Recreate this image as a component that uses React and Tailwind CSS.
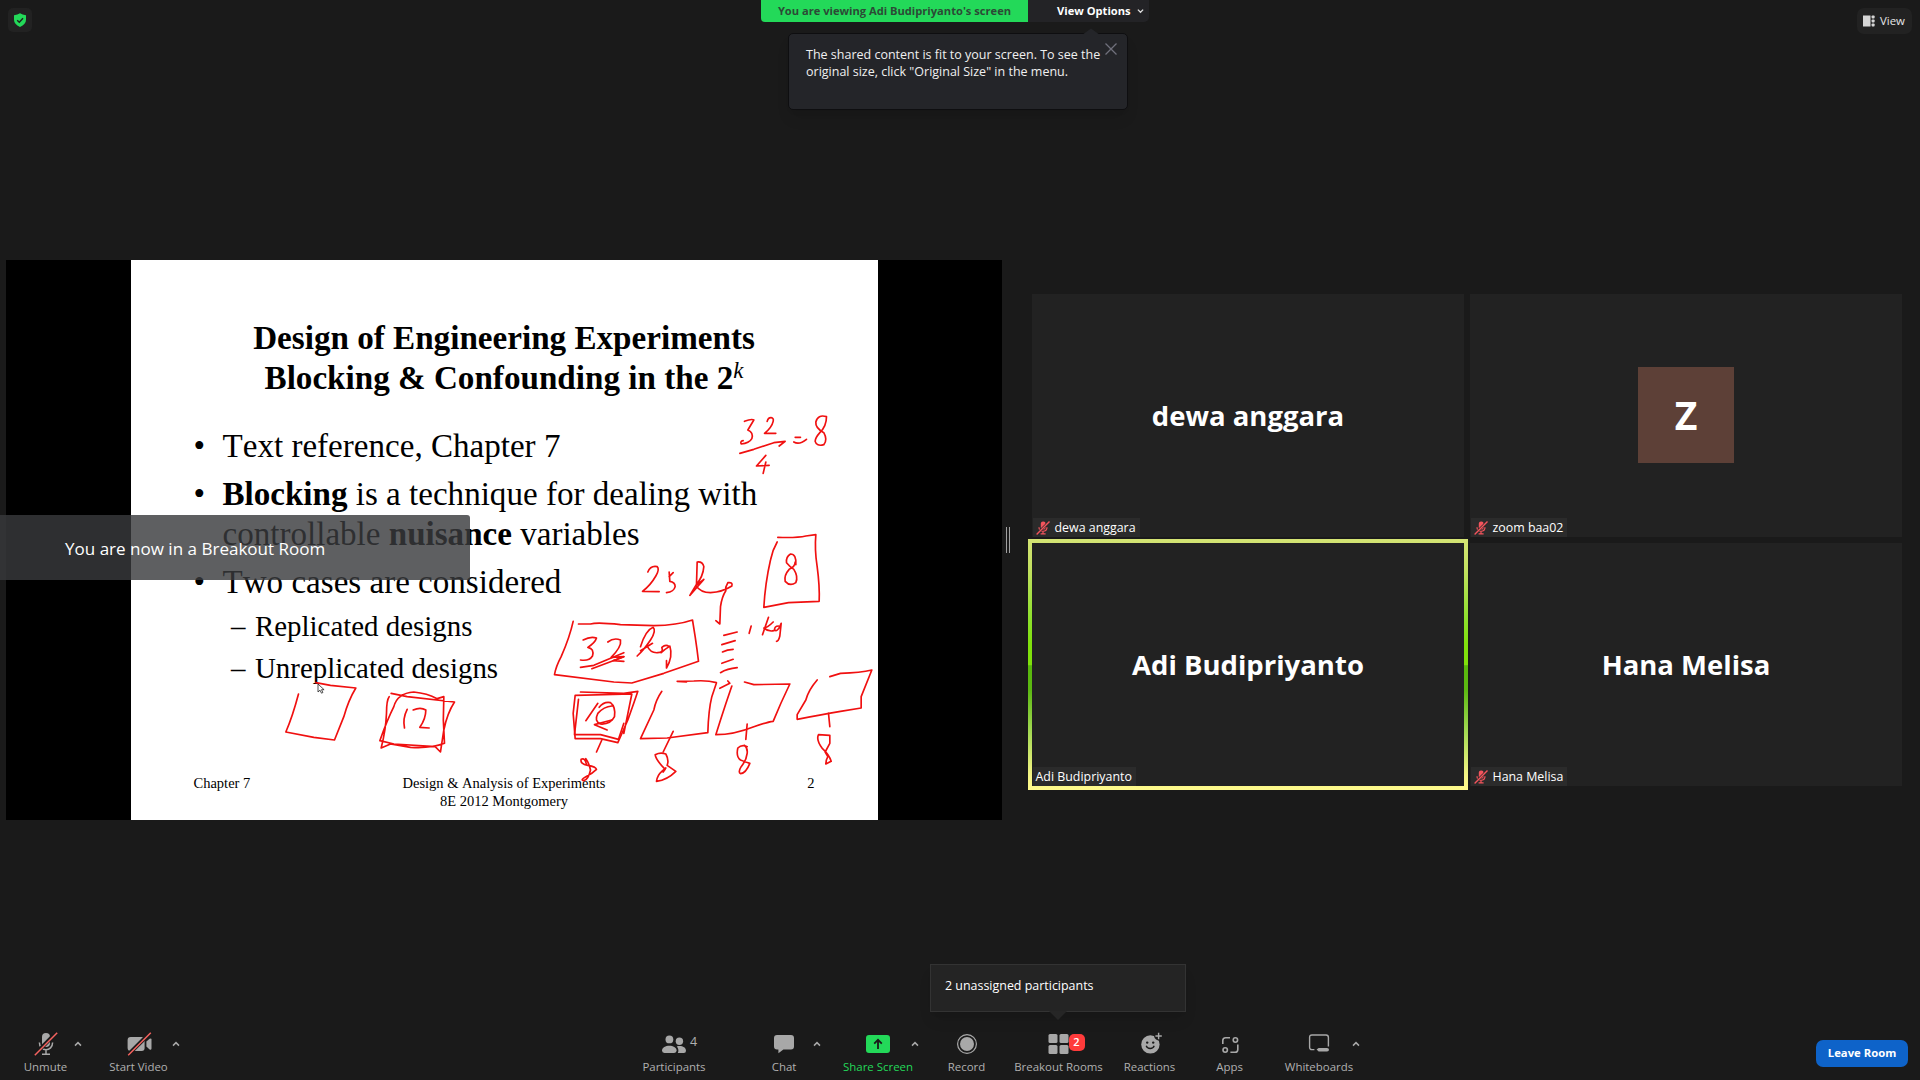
import React from "react";

const inkStrokes = [
  {
    origin: "translate(540 400) scale(0.33333)",
    paths: [
      // 32 / 4 = 8
      "M612 64 C622 60 634 56 640 60 L622 90 Q640 98 634 116 Q626 130 602 132 Q598 124 608 122",
      "M680 64 C684 48 702 50 698 64 C694 82 682 92 672 100 L706 100",
      "M598 160 L640 148 L700 128 L734 124 L716 138",
      "M676 166 L648 198 L686 196 M676 186 L668 220",
      "M764 112 L780 112 M760 126 Q776 136 798 118",
      "M858 50 Q832 42 826 66 Q824 84 850 98 Q862 120 850 134 Q828 140 824 124 Q824 114 838 98 Q858 78 858 50",
      // 25 kg
      "M322 516 Q330 496 350 500 Q358 508 346 528 Q330 556 306 574 L356 575",
      "M386 516 L388 544 Q404 546 404 560 Q400 576 378 578 M386 530 L398 518",
      "M468 552 L470 486 Q486 484 490 500 Q488 530 466 556 L448 586 L490 538 L466 556 Q480 578 510 578 Q546 576 574 558 Q578 546 562 548 Q554 560 556 572 Q544 590 540 620 L538 672 L526 662",
      // boxed 8
      "M712 412 Q770 414 796 408 L826 404 Q822 450 830 500 Q838 560 836 604 L744 608 L670 622 Q674 550 690 480 Q696 450 710 426",
      "M766 494 Q768 462 750 462 Q736 470 738 488 Q748 500 760 508 Q774 530 766 548 Q748 560 734 544 Q730 526 746 508 Q764 500 764 486",
    ],
  },
  {
    origin: "translate(540 600) scale(0.33333)",
    paths: [
      // 1 kg and the tally marks
      "M632 78 L626 100",
      "M684 52 L666 104 M698 66 Q680 84 670 84 Q684 96 700 92 M714 78 Q702 78 702 90 Q710 96 718 80 L722 70 L718 108 Q714 124 708 124",
      "M550 106 L590 96",
      "M544 134 L584 122",
      "M546 156 Q560 148 578 148",
      "M544 190 L578 178",
      "M540 218 Q560 206 590 203",
      "M538 265 L568 250 L562 243",
      // boxed 32 kg
      "M98 64 Q88 110 62 170 Q46 200 42 224 Q140 236 220 246 L274 249 L370 220 L474 184 Q470 150 464 110 L456 60 Q410 76 340 77 L240 74 Q170 66 150 72 L114 72",
      "M128 120 Q150 108 168 114 Q164 128 142 142 Q162 146 156 168 Q146 184 120 180",
      "M202 126 Q220 112 240 120 Q244 140 212 172 L250 170 L218 182 L250 184",
      "M120 202 L160 196 L250 158",
      "M154 206 L250 170",
      "M300 140 Q316 90 338 82 Q348 92 330 120 Q310 150 290 168 M300 152 L336 130 M320 138 Q330 160 352 158 Q370 158 364 142 Q376 132 386 140 Q370 150 362 158 M388 138 Q398 170 378 204 L378 182",
      // boxed 10
      "M120 276 L250 280 L292 274 Q280 310 262 360 L232 428 L180 416 L104 416 L98 340 L104 286 L274 282 Q262 340 250 400",
      "M114 298 L102 404 L180 404 L234 418 L250 370",
      "M172 310 L136 362",
      "M176 322 Q190 304 210 308 Q226 320 222 350 Q210 374 180 372 Q160 364 172 340 Q190 320 214 318",
      "M214 360 L162 374 L200 390",
      "M184 420 L168 456",
      "M138 494 Q134 472 122 478 Q118 492 142 496 Q166 500 168 508 Q154 522 136 530 Q118 540 130 542 Q144 538 150 510 Q146 490 136 476",
      // second block
      "M364 274 Q346 300 340 330 L300 416 L380 414 L502 398 Q504 330 514 290 L528 248 Q500 240 460 243 L410 244 L438 246",
      "M398 394 L368 456",
      "M368 516 L374 508 Q346 480 344 464 Q360 456 376 462 Q386 480 380 496 L406 514 Q380 540 348 544 Q350 526 364 514 L376 504",
      // third block
      "M574 258 Q556 310 540 360 L526 404 Q580 404 640 380 Q680 366 698 364 Q720 310 748 252 L640 254 L612 246",
      "M620 372 L616 418",
      "M620 440 Q604 432 592 444 Q586 470 600 480 Q620 488 628 490 Q616 520 600 521 Q592 516 602 500 Q618 480 620 460 Q622 444 612 436",
      // fourth block
      "M830 240 Q804 270 796 300 L770 344 L770 358 Q840 344 900 334 L962 324 L962 290 L994 210 Q960 218 900 220 L868 230",
      "M864 340 L868 380",
      "M868 406 L834 404 Q826 420 846 446 Q866 464 872 484 L856 492 Q856 480 862 470 L854 456 L868 430 L868 406",
    ],
  },
  {
    origin: "translate(0 500) scale(0.33333)",
    paths: [
      "M946 548 L990 556 L1066 564 Q1044 600 1030 650 L1002 720 L940 712 L856 696 Q876 650 894 582",
      // boxed 12
      "M1172 580 L1220 590 L1362 606 Q1340 640 1330 690 L1320 756 L1304 740 L1180 732 L1138 722 Q1160 660 1180 620 Q1190 580 1240 576 Q1280 580 1310 596 L1330 590 Q1326 660 1332 730 Q1290 746 1230 742 L1170 732 L1142 744 Q1156 690 1158 640 Q1158 600 1166 590",
      "M1220 628 Q1206 656 1212 684",
      "M1238 630 Q1260 620 1276 630 Q1276 656 1258 682 L1286 684",
    ],
  },
];

const Ink = () => (
  <svg viewBox="130.5 260 747 560" className="absolute inset-0 w-[747px] h-[560px]" fill="none">
    {inkStrokes.map((group) => (
      <g key={group.origin} transform={group.origin} stroke="#f01010" strokeWidth="5" strokeLinecap="round" strokeLinejoin="round">
        {group.paths.map((d) => (
          <path key={d} d={d} />
        ))}
      </g>
    ))}
    <path d="M317.5 684 v8 l2 -1.8 l1.5 3 l1.4 -.7 l-1.4 -2.8 h2.6 z" fill="#fff" stroke="#222" strokeWidth=".8" />
  </svg>
);

const Slide = () => (
  <div className="relative w-[747px] h-[560px] bg-white text-black font-['Liberation_Serif',serif] [font-kerning:none] pt-[58px] flex flex-col">
    <h1 className="text-center text-[33.15px] leading-[40px] font-bold">
      Design of Engineering Experiments
      <br />
      Blocking &amp; Confounding in the 2<sup className="text-[23px] font-normal italic">k</sup>
    </h1>
    <ul className="mt-[28px] ml-[63px] flex flex-col gap-2 text-[33.1px] leading-[40px]">
      <li className="flex">
        <span className="w-[29px]">•</span>
        <span>Text reference, Chapter 7</span>
      </li>
      <li className="flex">
        <span className="w-[29px]">•</span>
        <span>
          <b>Blocking</b> is a technique for dealing with
          <br />
          controllable <b>nuisance</b> variables
        </span>
      </li>
      <li className="flex">
        <span className="w-[29px]">•</span>
        <span>Two cases are considered</span>
      </li>
    </ul>
    <ul className="mt-[6px] ml-[100.5px] flex flex-col gap-[6px] text-[28.9px] leading-[36px]">
      <li className="flex">
        <span className="w-[24px]">–</span>Replicated designs
      </li>
      <li className="flex">
        <span className="w-[24px]">–</span>Unreplicated designs
      </li>
    </ul>
    <div className="mt-auto mb-[10px] grid grid-cols-3 px-[63px] text-[14.5px] leading-[17.5px]">
      <span>Chapter 7</span>
      <span className="text-center whitespace-nowrap">
        Design &amp; Analysis of Experiments
        <br />
        8E 2012 Montgomery
      </span>
      <span className="text-right">2</span>
    </div>
    <Ink />
  </div>
);

const MutedMic = () => (
  <svg viewBox="0 0 14 14" className="w-[14px] h-[14px]">
    <rect x="4.8" y="0.6" width="4.8" height="8" rx="2.2" fill="#f4545c" />
    <path d="M3 6.2c0 5.4 8 5.4 8 0M7 10.4v2.2M4.6 12.8h5" fill="none" stroke="#f4545c" strokeWidth="1.2" />
    <path d="M0.4 13.4L13.4 0.6" stroke="#2b2b2b" strokeWidth="2.6" />
    <path d="M0.6 13.5L13.5 0.6" stroke="#f4545c" strokeWidth="1.4" />
  </svg>
);

const Tile = ({ name, muted, avatar, active }) => (
  <div className="relative w-[432px] h-[243px] bg-[#222222] flex items-center justify-center text-white">
    {active && (
      <div className="absolute -inset-1 border-4 [border-image:linear-gradient(#d4e474_0%,#c3e060_12%,#8de02c_32%,#80e00c_42%,#80e00c_50%,#59b80c_50.5%,#5cb812_60%,#a0d850_76%,#f4f484_94%,#fffa8c_100%)_4]" />
    )}
    {avatar ? (
      <div className="w-24 h-24 mb-px bg-[#5d4037] flex items-center justify-center text-[39px] font-bold">{avatar}</div>
    ) : (
      <span className="text-[27.5px] font-bold">{name}</span>
    )}
    <div className="absolute left-px bottom-0 h-[19px] bg-[#2b2b2b] flex items-center gap-[5px] pl-[2.5px] pr-[4px] text-[12.4px] leading-[19px] whitespace-nowrap">
      {muted && <MutedMic />}
      <span>{name}</span>
    </div>
  </div>
);

const Caret = ({ className }) => (
  <svg viewBox="0 0 8 6" className={`w-2 h-1.5 mt-[21px] shrink-0 ${className}`}>
    <path d="M1 4.6L4 1.6L7 4.6" fill="none" stroke="#a8a8a8" strokeWidth="1.5" />
  </svg>
);

const Tool = ({ label, className, children }) => (
  <div className={`flex flex-col items-center shrink-0 pt-3 text-[11.45px] leading-[15px] whitespace-nowrap ${className}`}>
    <div className="relative w-6 h-6 mb-[3px]">{children}</div>
    {label}
  </div>
);

const iconClass = "w-6 h-6 overflow-visible";

const Toolbar = () => (
  <footer className="h-[60px] flex items-start pl-[23px] pr-3 text-[#b0b0b0]">
    <Tool label="Unmute" className="w-[45px]">
      <svg viewBox="0 0 24 24" className={iconClass}>
        <rect x="8" y="1" width="8" height="14" rx="4" fill="#a8a8a8" />
        <path d="M5.4 10.5c0 9.6 13.2 9.6 13.2 0M12 18v4M8 22.2h8" fill="none" stroke="#a8a8a8" strokeWidth="1.5" />
        <path d="M0 23.4L23 0" stroke="#1a1a1a" strokeWidth="4" />
        <path d="M0.8 23.2L23.2 0.8" stroke="#f4625f" strokeWidth="1.5" />
      </svg>
    </Tool>
    <Caret className="ml-[6px]" />
    <Tool label="Start Video" className="ml-[26px] w-[61px]">
      <svg viewBox="0 0 24 24" className={iconClass}>
        <rect x="0.6" y="5" width="17" height="14" rx="3" fill="#a8a8a8" />
        <path d="M19.4 9.6l3.2-2.8q1.9-1 1.9.8v9q0 1.8-1.9.8l-3.2-2.8z" fill="#a8a8a8" />
        <path d="M0.5 23.4L24 0" stroke="#1a1a1a" strokeWidth="4" />
        <path d="M1.2 23.2L23.8 0.8" stroke="#f4625f" strokeWidth="1.5" />
      </svg>
    </Tool>
    <Caret className="ml-[3px]" />
    <Tool label="Participants" className="ml-[462px] w-[64px]">
      <svg viewBox="0 0 24 24" className={iconClass} fill="#a8a8a8">
        <circle cx="7.4" cy="7.4" r="3.9" />
        <circle cx="17.4" cy="9.2" r="3.7" />
        <path d="M0 18.6c0-6.6 14.6-6.6 14.6 0q0 2.4-2.4 2.4H2.4Q0 21 0 18.6z" />
        <path d="M14.8 14.4c4-1.2 9.2.2 9.2 4.4q0 2.2-2.2 2.2h-6q1.6-3.4-1-6.6z" />
      </svg>
      <span className="absolute left-[28px] top-[2px] text-[12.5px] leading-[16px]">4</span>
    </Tool>
    <Tool label="Chat" className="ml-[58px] w-[40px]">
      <svg viewBox="0 0 24 24" className={iconClass} fill="#a8a8a8">
        <path d="M5 3h14q3 0 3 3v8.4q0 3-3 3h-7.6L6.4 21.2v-3.8H5q-3 0-3-3V6q0-3 3-3z" />
      </svg>
    </Tool>
    <Caret className="ml-[9px]" />
    <Tool label="Share Screen" className="ml-[21px] w-[72px] text-[#23d959]">
      <svg viewBox="0 0 24 24" className={iconClass}>
        <rect x="0" y="3" width="24" height="18" rx="3" fill="#23d959" />
        <path d="M12 17V8.4M8.2 11.6L12 7.8l3.8 3.8" fill="none" stroke="#1a1a1a" strokeWidth="1.8" />
      </svg>
    </Tool>
    <Caret className="-ml-[3px]" />
    <Tool label="Record" className="ml-[26px] w-[43px]">
      <svg viewBox="0 0 24 24" className={iconClass}>
        <circle cx="12" cy="12" r="9.4" fill="none" stroke="#a8a8a8" strokeWidth="1.2" />
        <circle cx="12" cy="12" r="7" fill="#a8a8a8" />
      </svg>
    </Tool>
    <Tool label="Breakout Rooms" className="ml-[26px] w-[89px]">
      <svg viewBox="0 0 24 24" className={iconClass} fill="#a8a8a8">
        <rect x="1.5" y="2" width="9" height="9" rx="1.5" />
        <rect x="12.5" y="2" width="9" height="9" rx="1.5" />
        <rect x="1.5" y="13" width="9" height="9" rx="1.5" />
        <rect x="12.5" y="13" width="9" height="9" rx="1.5" />
      </svg>
      <span className="absolute left-[22px] top-[2px] w-4 h-[17px] rounded-[5px] bg-[#ff3b3b] text-white text-[11px] leading-[16px] font-semibold text-center">
        2
      </span>
    </Tool>
    <Tool label="Reactions" className="ml-5 w-[53px]">
      <svg viewBox="0 0 24 24" className={iconClass}>
        <circle cx="12.4" cy="12.4" r="9.2" fill="#a8a8a8" />
        <circle cx="9.2" cy="10.6" r="1.2" fill="#1a1a1a" />
        <circle cx="15.2" cy="10.6" r="1.2" fill="#1a1a1a" />
        <path d="M8.2 13.8c1.2 3.6 6.8 3.6 8 0" fill="none" stroke="#1a1a1a" strokeWidth="1.3" />
        <circle cx="20.6" cy="4" r="4.4" fill="#1a1a1a" />
        <path d="M20.6 0.8v6.4M17.4 4h6.4" stroke="#a8a8a8" strokeWidth="1.4" />
      </svg>
    </Tool>
    <Tool label="Apps" className="ml-[39px] w-[29px]">
      <svg viewBox="0 0 24 24" className={iconClass} fill="none" stroke="#a8a8a8" strokeWidth="1.6">
        <path d="M4.8 12V8.6q0-2.8 2.8-2.8H12M19.8 12.6v4.8q0 2.8-2.8 2.8h-4.6" />
        <circle cx="17.4" cy="8" r="2.2" />
        <circle cx="7.2" cy="18" r="2.2" />
      </svg>
    </Tool>
    <Tool label="Whiteboards" className="ml-10 w-[70px]">
      <svg viewBox="0 0 24 24" className={iconClass}>
        <path d="M7.4 17.6H5q-2.4 0-2.4-2.4V5.4Q2.6 3 5 3h14q2.4 0 2.4 2.4v9.2" fill="none" stroke="#a8a8a8" strokeWidth="1.4" />
        <path d="M9.6 17.6l2-1.6H20q2 0 2 1.8t-2 1.8h-8.4z" fill="#a8a8a8" />
      </svg>
    </Tool>
    <Caret className="-ml-0.5" />
    <button className="ml-auto mt-5 w-[92px] h-[27px] rounded-[7px] bg-[#0e63c9] text-white text-[11.3px] font-bold">
      Leave Room
    </button>
  </footer>
);

const Header = () => (
  <header className="relative h-[60px] flex items-start">
    <div className="ml-2 mt-2 w-6 h-6 rounded-[5px] bg-[#222222] flex items-center justify-center">
      <svg viewBox="0 0 14 14" className="w-[14px] h-[14px]">
        <path d="M7 0.2Q9.4 1.9 13 2.2V6.8Q13 11.4 7 13.9Q1 11.4 1 6.8V2.2Q4.6 1.9 7 0.2z" fill="#23d959" />
        <path d="M4.2 7.2L6.3 9.2L10 5.2" fill="none" stroke="#1f1f1f" strokeWidth="1.4" />
      </svg>
    </div>
    <div className="ml-[729px] flex h-[22px] text-[11.15px] leading-[22px] font-bold whitespace-nowrap">
      <div className="w-[267px] h-[22px] rounded-bl bg-[#23d959] text-[#2c4a36] text-center">
        You are viewing Adi Budipriyanto's screen
      </div>
      <div className="w-[121px] h-[22px] rounded-br-[5px] bg-[#232326] text-white flex items-center pl-[29px] gap-[6px]">
        View Options
        <svg viewBox="0 0 8 6" className="w-[7px] h-[6px]">
          <path d="M1 1.4L4 4.4L7 1.4" fill="none" stroke="#e0e0e0" strokeWidth="1.5" />
        </svg>
      </div>
    </div>
    <button className="ml-auto mr-2 mt-2 w-[55px] h-[26px] rounded-[7px] bg-[#222222] text-[#e6e6e6] text-[11.4px] flex items-center pl-[6px] pb-px gap-[5px]">
      <svg viewBox="0 0 12 12" className="w-3 h-3" fill="#d6d6d6">
        <rect x="0" y="0.5" width="7.5" height="11" />
        <rect x="8.6" y="0.5" width="3" height="3" rx=".8" />
        <rect x="8.6" y="4.5" width="3" height="3" rx=".8" />
        <rect x="8.6" y="8.5" width="3" height="3" rx=".8" />
      </svg>
      View
    </button>

    {/* Fit-to-screen hint */}
    <div className="absolute left-[788px] top-[33px] w-[340px] h-[77px] rounded-[5px] bg-[#242529] border border-[#0e0e10] shadow-lg pl-[17px] pt-3 text-[12.5px] leading-[17px] text-[#f0f0f0] whitespace-nowrap">
      The shared content is fit to your screen. To see the
      <br />
      original size, click "Original Size" in the menu.
      <svg viewBox="0 0 18 7" className="absolute left-[293px] -top-[6px] w-[18px] h-[7px]">
        <path d="M0 7L9 0.5L18 7z" fill="#242529" />
      </svg>
      <svg viewBox="0 0 12 12" className="absolute left-[316px] top-[9px] w-3 h-3">
        <path d="M0.5 0.5L11.5 11.5M11.5 0.5L0.5 11.5" stroke="#70707c" strokeWidth="1.3" />
      </svg>
    </div>
  </header>
);

const App = () => {
  return (
    <div className="relative w-[1920px] h-[1080px] overflow-hidden bg-[#1a1a1a] font-['Open_Sans',sans-serif] flex flex-col">
      <Header />

      <main className="flex-1 flex items-center pl-[6px]">
        <div className="w-[996px] h-[560px] bg-black pl-[124.5px]">
          <Slide />
        </div>
        <div className="ml-1 w-1 h-[26px] border-x border-[#a0a0a0]" />
        <div className="ml-[22px] grid grid-cols-[432px_432px] gap-[6px]">
          <Tile name="dewa anggara" muted />
          <Tile name="zoom baa02" muted avatar="Z" />
          <Tile name="Adi Budipriyanto" active />
          <Tile name="Hana Melisa" muted />
        </div>
      </main>

      <Toolbar />

      {/* Breakout room toast */}
      <div className="absolute left-0 top-[515px] w-[470px] h-[65px] rounded-tr-[3px] bg-[#393a3c]/81 text-white text-[17.05px] leading-[68px] pl-[65px]">
        You are now in a Breakout Room
      </div>

      {/* Breakout rooms popover */}
      <div className="absolute left-[930px] top-[964px] w-[256px] h-[48px] bg-[#242424] border border-[#333333] shadow-lg pl-[14px] text-white text-[12.45px] leading-[42px]">
        2 unassigned participants
        <svg viewBox="0 0 18 9" className="absolute left-[118px] top-[46px] w-[18px] h-[9px]">
          <path d="M0 0H18L9 9z" fill="#262626" />
        </svg>
      </div>
    </div>
  );
};

export default App;
